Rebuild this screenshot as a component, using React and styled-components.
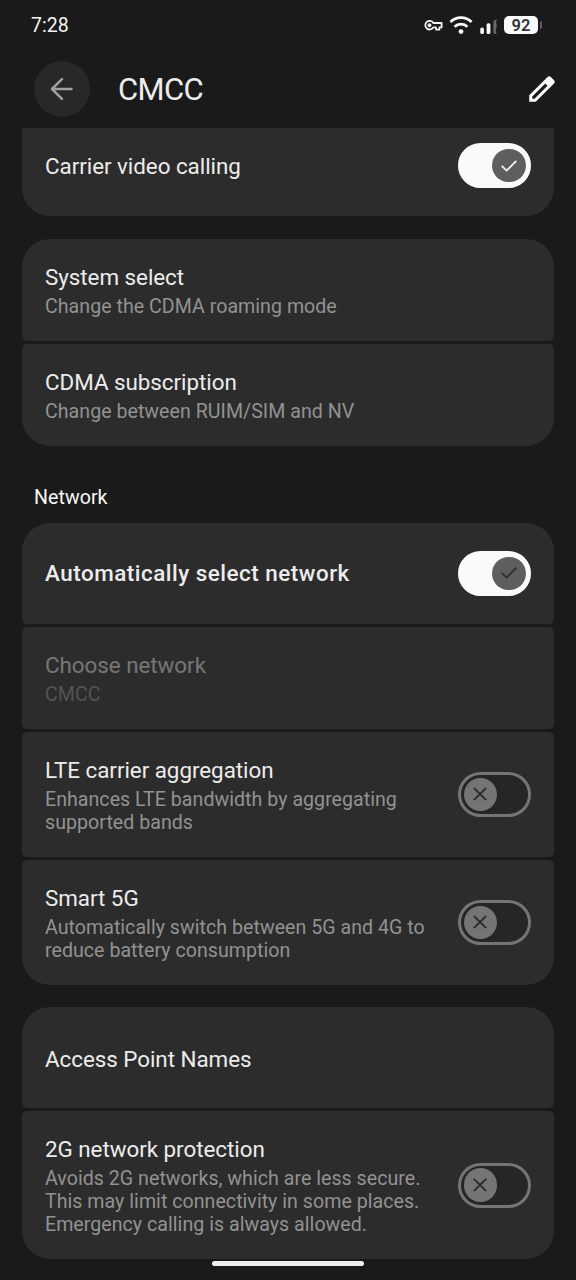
import React from "react";
import styled, { createGlobalStyle } from "styled-components";

const GlobalStyle = createGlobalStyle`
  *, *::before, *::after { box-sizing: border-box; }
  body {
    margin: 0;
    background: #1a1a1a;
    font-family: Roboto, "Liberation Sans", sans-serif;
  }
`;

const Screen = styled.div`
  position: relative;
  display: flex;
  flex-direction: column;
  width: 576px;
  height: 1280px;
  overflow: hidden;
  background: #1a1a1a;
  color: #ececec;
`;

const StatusBar = styled.header`
  display: flex;
  align-items: center;
  justify-content: space-between;
  height: 50px;
  padding: 0 34px 0 31px;
`;

const Clock = styled.time`
  padding-top: 1px;
  font-size: 19.5px;
  line-height: 24px;
  color: #f4f4f4;
`;

const StatusIcons = styled.div`
  display: flex;
  align-items: center;
  height: 24px;
`;

const KeyIcon = styled.svg`
  width: 19px;
  height: 14px;
  margin-right: 6px;
`;

const WifiIcon = styled.svg`
  width: 24px;
  height: 20px;
  margin-right: 7px;
`;

const SignalIcon = styled.svg`
  width: 18px;
  height: 18px;
  margin-right: 6px;
`;

const Battery = styled.div`
  display: flex;
  align-items: center;
  justify-content: center;
  width: 34px;
  height: 18px;
  padding-top: 1px;
  border-radius: 5px;
  background: #fafafa;
  color: #333;
  font-size: 16.5px;
  font-weight: 600;
  line-height: 18px;
`;

const BatteryCap = styled.span`
  width: 2px;
  height: 8px;
  margin-left: 2px;
  border-radius: 0 2px 2px 0;
  background: #5c5c5c;
`;

const AppBar = styled.div`
  display: flex;
  align-items: center;
  height: 78px;
  padding: 0 20px 0 34px;
`;

const BackButton = styled.button`
  display: flex;
  align-items: center;
  justify-content: center;
  width: 56px;
  height: 56px;
  padding: 0;
  border: 0;
  border-radius: 50%;
  background: #282828;
`;

const PageTitle = styled.h1`
  flex: 1;
  margin: 0 0 0 28px;
  padding-top: 2px;
  font-size: 31px;
  font-weight: 400;
  line-height: 40px;
  letter-spacing: -0.6px;
  color: #ececec;
`;

const EditButton = styled.button`
  display: flex;
  padding: 0;
  border: 0;
  background: none;
`;

const Content = styled.main`
  display: flex;
  flex: 1;
  flex-direction: column;
  overflow: hidden;
  padding: 0 22.5px 0 22.4px;
`;

const Group = styled.section`
  display: flex;
  flex-shrink: 0;
  flex-direction: column;
  gap: 3px;
  margin-top: ${(p) => p.$offset}px;
  border-radius: ${(p) => (p.$continued ? "5px 5px 28px 28px" : "28px")};
  overflow: hidden;
`;

const GroupLabel = styled.h2`
  margin: 40px 0 0 11.6px;
  font-size: 19.6px;
  font-weight: 400;
  line-height: 24px;
  letter-spacing: 0.05px;
  color: #f8f8f8;
`;

const Row = styled.div`
  display: flex;
  align-items: center;
  justify-content: space-between;
  height: ${(p) => p.$height}px;
  padding: 0 22.5px 0 22.6px;
  border-radius: 5px;
  background: #2c2c2c;
`;

const Labels = styled.div`
  display: flex;
  flex-direction: column;
  width: 400px;
  padding-top: ${(p) => p.$inset}px;
  opacity: ${(p) => (p.$disabled ? 0.38 : 1)};
`;

const Title = styled.span`
  font-size: 22.4px;
  font-weight: ${(p) => (p.$strong ? 500 : 400)};
  line-height: 27px;
  letter-spacing: ${(p) => (p.$strong ? 0.52 : -0.04)}px;
  color: #ececec;
`;

const Summary = styled.span`
  margin-top: 4px;
  font-size: 19.6px;
  line-height: 23px;
  letter-spacing: 0.03px;
  white-space: pre-line;
  color: #929292;
`;

const Track = styled.button`
  display: flex;
  flex-shrink: 0;
  align-items: center;
  justify-content: ${(p) => (p.$on ? "flex-end" : "flex-start")};
  width: 73px;
  height: 45px;
  padding: 0 ${(p) => (p.$on ? 2.5 : 2.6)}px;
  border: 3px solid ${(p) => (p.$on ? "#fafafa" : "#757575")};
  border-radius: 23px;
  background: ${(p) => (p.$on ? "#fafafa" : "#262626")};
`;

const Thumb = styled.span`
  display: flex;
  align-items: center;
  justify-content: center;
  width: 33.5px;
  height: 33.5px;
  border-radius: 50%;
  background: ${(p) => (p.$on ? "#5e5e5e" : "#757575")};
`;

const HomeIndicator = styled.div`
  position: absolute;
  bottom: 14px;
  left: 212px;
  width: 152px;
  height: 5px;
  border-radius: 3px;
  background: #efefef;
`;

function Toggle({ on, mark = "#f5f5f5" }) {
  return (
    <Track type="button" role="switch" aria-checked={!!on} $on={on}>
      <Thumb $on={on}>
        <svg width="18" height="18" viewBox="0 0 18 18" fill="none" strokeWidth="1.8">
          {on ? (
            <path d="M1.7 8.8 6.6 13.6 16.3 3.8" stroke={mark} />
          ) : (
            <path d="M2.8 2.8 15.2 15.2M15.2 2.8 2.8 15.2" stroke="#2a2a2a" />
          )}
        </svg>
      </Thumb>
    </Track>
  );
}

function Setting({ title, summary, height, inset = 3, strong, disabled, children }) {
  return (
    <Row $height={height}>
      <Labels $disabled={disabled} $inset={inset}>
        <Title $strong={strong}>{title}</Title>
        {summary && <Summary>{summary}</Summary>}
      </Labels>
      {children}
    </Row>
  );
}

export default function App() {
  return (
    <Screen>
      <GlobalStyle />
      <StatusBar>
        <Clock>7:28</Clock>
        <StatusIcons>
          <KeyIcon viewBox="0 0 19 14" fill="none" stroke="#f2f2f2" strokeWidth="1.8" strokeLinejoin="round">
            <path d="M9.3 5A4.3 4.3 0 1 0 9.3 9.4H12V11.6H15.4V9.4H17.6V5Z" />
            <circle cx="5.5" cy="7.2" r="1.1" />
          </KeyIcon>
          <WifiIcon viewBox="0 0 24 20" fill="none" stroke="#fafafa" strokeWidth="2.8">
            <path d="M1.4 7.1A15 15 0 0 1 22.6 7.1" />
            <path d="M5.6 11.8A9 9 0 0 1 18.4 11.8" />
            <circle cx="12" cy="16.6" r="2.4" fill="#fafafa" stroke="none" />
          </WifiIcon>
          <SignalIcon viewBox="0 0 18 18">
            <rect x="0.3" y="11.4" width="3.6" height="6.5" rx="1.5" fill="#fafafa" />
            <rect x="6.6" y="7.3" width="3.8" height="10.6" rx="1.5" fill="#fafafa" />
            <path d="M13.4 5.5Q13.6 3.6 17 3.4Q15.2 6 16.6 9V11.5L15.6 14L16.6 17.9H15Q13.4 17.9 13.4 16Z" fill="#686868" />
          </SignalIcon>
          <Battery>92</Battery>
          <BatteryCap />
        </StatusIcons>
      </StatusBar>

      <AppBar>
        <BackButton type="button" aria-label="Back">
          <svg width="24" height="24" viewBox="0 0 24 24" fill="none" stroke="#a0a0a0" strokeWidth="2.5" strokeLinecap="round" strokeLinejoin="round">
            <path d="M21.5 12H2M12 2.2 2 12 12 21.8" />
          </svg>
        </BackButton>
        <PageTitle>CMCC</PageTitle>
        <EditButton type="button" aria-label="Edit">
          <svg width="28" height="28" viewBox="0 0 28 28">
            <path
              fill="#fafafa"
              fillRule="evenodd"
              d="M1.2 20.3 19.3 2.2Q21.2.3 23.1 2.2L25.8 4.9Q27.7 6.8 25.8 8.7L7.7 26.8H1.2ZM4.3 21.5V23.7H6.5L19.5 10.7 17.3 8.5Z"
            />
          </svg>
        </EditButton>
      </AppBar>

      <Content>
        <Group $offset={-13} $continued>
          <Setting title="Carrier video calling" height={101} inset={2}>
            <Toggle on />
          </Setting>
        </Group>

        <Group $offset={22.5}>
          <Setting title="System select" summary="Change the CDMA roaming mode" height={102.3} />
          <Setting title="CDMA subscription" summary="Change between RUIM/SIM and NV" height={102.2} />
        </Group>

        <GroupLabel>Network</GroupLabel>
        <Group $offset={13}>
          <Setting title="Automatically select network" height={101} inset={1} strong>
            <Toggle on mark="#2c2c2c" />
          </Setting>
          <Setting title="Choose network" summary="CMCC" height={102} disabled />
          <Setting
            title="LTE carrier aggregation"
            summary={"Enhances LTE bandwidth by aggregating\nsupported bands"}
            height={125}
          >
            <Toggle />
          </Setting>
          <Setting
            title="Smart 5G"
            summary={"Automatically switch between 5G and 4G to\nreduce battery consumption"}
            height={125}
          >
            <Toggle />
          </Setting>
        </Group>

        <Group $offset={22.5}>
          <Setting title="Access Point Names" height={101} />
          <Setting
            title="2G network protection"
            summary={"Avoids 2G networks, which are less secure.\nThis may limit connectivity in some places.\nEmergency calling is always allowed."}
            height={147.5}
            inset={1}
          >
            <Toggle />
          </Setting>
        </Group>
      </Content>
      <HomeIndicator />
    </Screen>
  );
}
